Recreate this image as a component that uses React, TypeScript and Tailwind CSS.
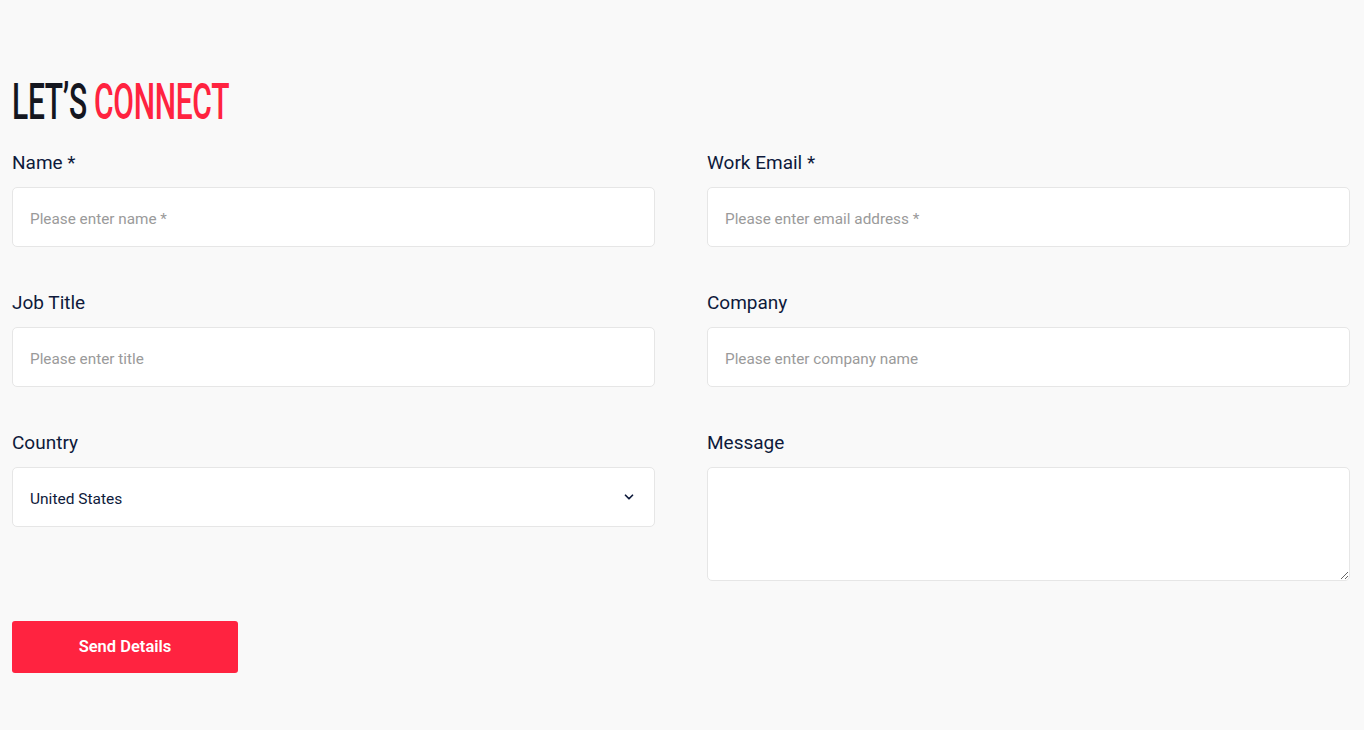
import { ChevronDown } from "lucide-react";

const body = "font-['Roboto','Liberation_Sans',sans-serif]";

function Field({
  label,
  placeholder,
}: {
  label: string;
  placeholder: string;
}) {
  return (
    <div className="flex flex-col">
      <label className="text-[19px] leading-[26px] text-[#0e1a3b]">{label}</label>
      <input
        type="text"
        placeholder={placeholder}
        className="mt-[11px] h-[60px] w-full rounded-[5px] border border-[#e6e6e6] bg-white px-[17px] pt-[4px] text-[15.3px] text-[#0e1a3b] outline-none placeholder:text-[#9a9a9a]"
      />
    </div>
  );
}

export default function App() {
  return (
    <div className={`min-h-[730px] bg-[#f9f9f9] px-3 pt-[74px] ${body}`}>
      <h1 className="h-[56px] overflow-visible whitespace-nowrap">
        <span className="inline-block origin-left scale-x-[0.6] font-['Roboto',sans-serif] text-[50px] font-medium leading-[56px] tracking-[-0.5px] text-[#14161f]">
          LET’S <span className="text-[#ff2340]">CONNECT</span>
        </span>
      </h1>

      <form className="mt-[20px] grid grid-cols-2 gap-x-[52px] gap-y-[43px] pr-[2px]">
        <Field label="Name *" placeholder="Please enter name *" />
        <Field label="Work Email *" placeholder="Please enter email address *" />
        <Field label="Job Title" placeholder="Please enter title" />
        <Field label="Company" placeholder="Please enter company name" />

        <div className="flex flex-col">
          <label className="text-[19px] leading-[26px] text-[#0e1a3b]">Country</label>
          <div className="relative mt-[11px]">
            <select
              defaultValue="United States"
              className="h-[60px] w-full appearance-none rounded-[5px] border border-[#e6e6e6] bg-white px-[17px] pt-[5px] text-[15.5px] text-[#0e1a3b] outline-none"
            >
              <option>United States</option>
              <option>Canada</option>
              <option>United Kingdom</option>
            </select>
            <ChevronDown
              className="pointer-events-none absolute right-[19px] top-[23px] h-[14px] w-[14px] text-[#0e1a3b]"
              strokeWidth={3}
            />
          </div>
        </div>

        <div className="flex flex-col">
          <label className="text-[19px] leading-[26px] text-[#0e1a3b]">Message</label>
          <textarea className="mt-[11px] h-[114px] w-full rounded-[5px] border border-[#e6e6e6] bg-white px-[17px] py-3 text-[15px] outline-none" />
        </div>
      </form>

      <button
        type="button"
        className="mt-[40px] h-[52px] w-[226px] rounded-[3px] bg-[#ff2340] pt-[1px] text-[16.5px] font-semibold text-white"
      >
        Send Details
      </button>
    </div>
  );
}
